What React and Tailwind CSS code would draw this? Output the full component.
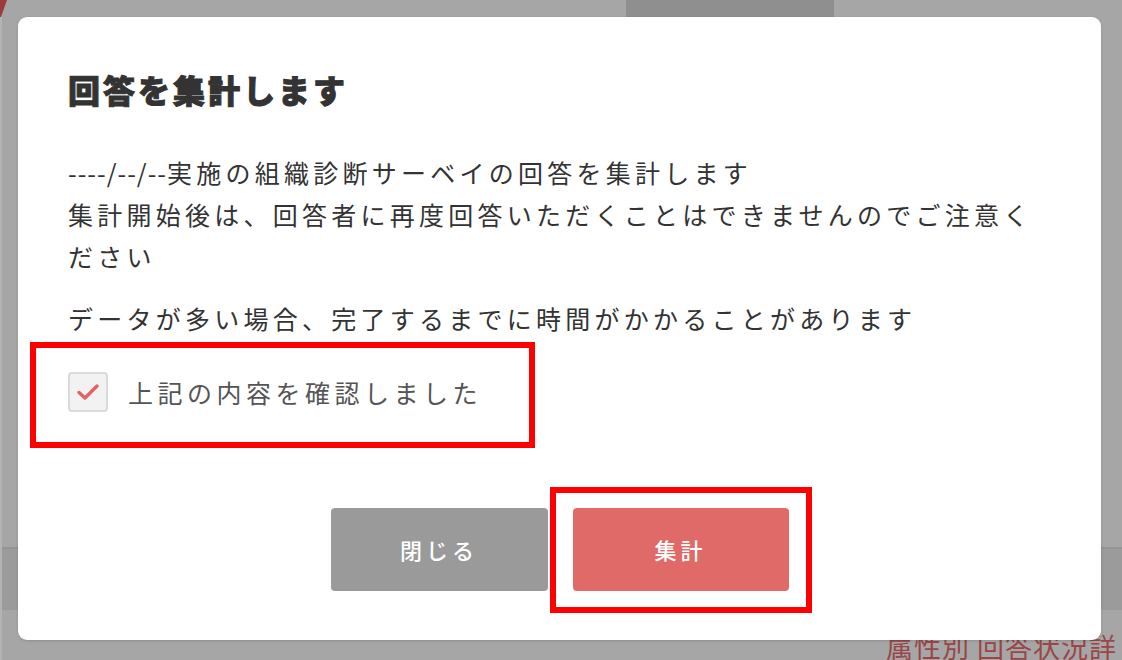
import React from 'react';

const jp = "font-['Noto_Sans_CJK_JP','Noto_Sans',sans-serif]";

const Backdrop = () => (
  <div className="absolute inset-0 flex flex-col bg-[#a6a6a6] border-l-2 border-[#b3b3b3]">
    <div className="flex h-[17px] shrink-0">
      <svg width="8" height="17" viewBox="0 0 8 17" className="shrink-0 -ml-[2px]">
        <polygon points="0,0 7,0 1,17 0,17" fill="#9b3c3c" />
      </svg>
      <div className="w-[618px]" />
      <div className="w-[208px] bg-[#8f8f8f]" />
    </div>
    <div className="h-[530px] shrink-0" />
    <div className="h-[63px] shrink-0 bg-[#9b9b9b] border-t-2 border-[#949494]" />
    <div className="flex justify-end pr-[5px] pt-[23px]">
      <span className={`${jp} text-[27px] leading-[27px] tracking-[1px] text-[#9a4646] whitespace-nowrap`}>
        属性別 回答状況詳
      </span>
    </div>
  </div>
);

const CheckIcon = () => (
  <svg width="26" height="20" viewBox="0 0 26 20" fill="none">
    <path d="M4 10.5 L10 16 L22 4" stroke="#e06464" strokeWidth="3.4" strokeLinecap="round" strokeLinejoin="round" />
  </svg>
);

const Modal = () => (
  <div className={`absolute left-[18px] top-[17px] w-[1083px] h-[623px] bg-white rounded-[9px] shadow-[0_1px_3px_rgba(0,0,0,0.15)] px-[50px] pt-[48px] pb-[49px] flex flex-col ${jp}`}>
    <h2 className="text-[32px] leading-[48px] font-black tracking-[3px] text-[#333333] [-webkit-text-stroke:1px_#333333]">
      回答を集計します
    </h2>

    <p className="mt-[38px] text-[25px] leading-[42px] tracking-[4.25px] text-[#333333]">
      <span className="tracking-[1px]">----/--/--</span>実施の組織診断サーベイの回答を集計します
      <br />
      集計開始後は、回答者に再度回答いただくことはできませんのでご注意ください
    </p>

    <p className="mt-[20px] text-[25px] leading-[42px] tracking-[4.25px] text-[#333333]">
      データが多い場合、完了するまでに時間がかかることがあります
    </p>

    <div className="relative mt-[33px] flex items-center gap-[20px]">
      <div className="w-[40px] h-[40px] rounded-[4px] bg-[#f2f2f2] border-2 border-[#dadada] flex items-center justify-center">
        <CheckIcon />
      </div>
      <span className="text-[25px] leading-[40px] tracking-[4.5px] text-[#555555]">上記の内容を確認しました</span>
      <div className="absolute left-[-38px] top-[-30px] w-[505px] h-[106px] border-[6px] border-[#ff0000] pointer-events-none" />
    </div>

    <div className="mt-[96px] flex justify-center gap-[25px]">
      <button className="w-[217px] h-[83px] rounded-[4px] bg-[#9a9a9a] text-white text-[22px] font-medium tracking-[4px]">
        閉じる
      </button>
      <div className="relative">
        <button className="w-[216px] h-[83px] rounded-[4px] bg-[#e06a67] text-white text-[22px] font-medium tracking-[4px]">
          集計
        </button>
        <div className="absolute left-[-23px] top-[-21px] w-[262px] h-[126px] border-[6px] border-[#ff0000] pointer-events-none" />
      </div>
    </div>
  </div>
);

export default function App() {
  return (
    <div className="relative w-[1122px] h-[660px] overflow-hidden">
      <Backdrop />
      <Modal />
    </div>
  );
}
